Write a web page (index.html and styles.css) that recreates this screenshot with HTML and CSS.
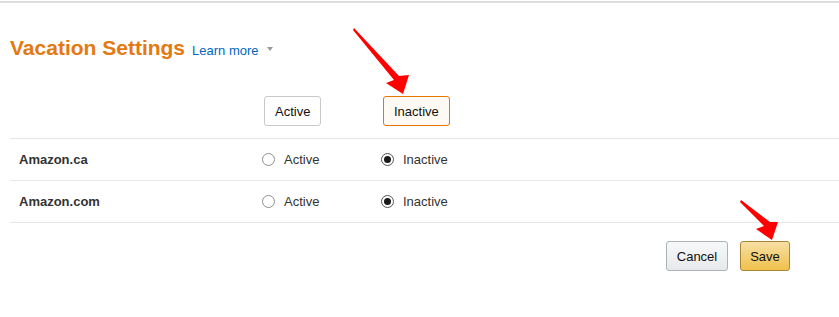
FILE: index.html
```html
<!DOCTYPE html>
<html lang="en">
<head>
<meta charset="UTF-8">
<meta name="viewport" content="width=device-width, initial-scale=1.0">
<title>Vacation Settings</title>
<link rel="stylesheet" href="styles.css">
</head>
<body>

<div class="page">
    <div class="topbar"></div>

    <div class="content">
        <h1 class="title">Vacation Settings<a href="#" class="learn-more">Learn more</a><span class="caret"></span></h1>

        <div class="grid head">
            <div></div>
            <div><button class="btn">Active</button></div>
            <div><button class="btn btn-selected">Inactive</button></div>
        </div>

        <div class="grid row">
            <div class="site">Amazon.ca</div>
            <label class="option"><span class="radio"></span>Active</label>
            <label class="option"><span class="radio checked"></span>Inactive</label>
        </div>

        <div class="grid row">
            <div class="site">Amazon.com</div>
            <label class="option"><span class="radio"></span>Active</label>
            <label class="option"><span class="radio checked"></span>Inactive</label>
        </div>

        <div class="actions">
            <button class="btn btn-cancel">Cancel</button>
            <button class="btn btn-save">Save</button>
        </div>
    </div>

    <!-- annotation arrows -->
    <svg class="arrows" width="839" height="317" viewBox="0 0 839 317">
        <polygon points="354,28 399,76 409,75 403,94 386,83 394,80 353,30" fill="#ff0000"/>
        <polygon points="741,200 770,222 778,222 772,240 756,229 764,226 740,202" fill="#ff0000"/>
    </svg>
</div>

</body>
</html>
```

FILE: styles.css
```css
body {
    margin: 0;
    padding: 0;
    background-color: #fff;
    font-family: "Liberation Sans", Arial, sans-serif;
    font-size: 13px;
    color: #111;
}
.page {
    position: relative;
    width: 839px;
    height: 317px;
    overflow: hidden;
}
.topbar {
    margin-top: 1px;
    height: 2px;
    background-color: #dddddd;
}
.content {
    margin-left: 10px;
}
.title {
    margin: 32px 0 0 0;
    height: 26px;
    font-size: 21px;
    line-height: 26px;
    font-weight: bold;
    color: #e47911;
}
.learn-more {
    margin-left: 7px;
    font-size: 13px;
    line-height: 13px;
    font-weight: normal;
    color: #0066c0;
    text-decoration: none;
}
.caret {
    display: inline-block;
    margin-left: 8px;
    vertical-align: 4px;
    border-left: 3.5px solid transparent;
    border-right: 3.5px solid transparent;
    border-top: 4px solid #999;
}
.grid {
    display: grid;
    grid-template-columns: 252px 119px 1fr;
    align-items: center;
    border-bottom: 1px solid #e7e7e7;
}
.head {
    margin-top: 35px;
    padding-bottom: 12px;
}
.head .btn {
    margin-left: 2px;
}
.row {
    height: 41px;
}
.site {
    padding-left: 9px;
    font-weight: bold;
    color: #333;
}
.option {
    display: flex;
    align-items: center;
    gap: 9px;
    color: #333;
}
.radio {
    width: 11px;
    height: 11px;
    border: 1px solid #8f8f8f;
    border-radius: 50%;
    background-color: #fff;
    display: flex;
    align-items: center;
    justify-content: center;
}
.radio.checked {
    border-color: #555;
}
.radio.checked::after {
    content: "";
    width: 7px;
    height: 7px;
    border-radius: 50%;
    background-color: #1a1a1a;
}
.btn {
    height: 30px;
    padding: 0 10px;
    font-family: "Liberation Sans", Arial, sans-serif;
    font-size: 13px;
    color: #111;
    background-color: #fff;
    border: 1px solid #c9c9c9;
    border-radius: 3px;
    cursor: pointer;
}
.btn-selected {
    border-color: #e77600;
    background-color: #fef9f3;
}
.actions {
    display: flex;
    justify-content: flex-end;
    gap: 12px;
    margin-top: 18px;
    padding-right: 49px;
}
.btn-cancel {
    width: 62px;
    padding: 0;
    border-color: #adb1b8;
    background: linear-gradient(#f7f8fa, #e7e9ec);
}
.btn-save {
    width: 50px;
    padding: 0;
    border-color: #a88734;
    background: linear-gradient(#f7dfa5, #f0c14b);
}
.arrows {
    position: absolute;
    top: 0;
    left: 0;
    pointer-events: none;
}
```
